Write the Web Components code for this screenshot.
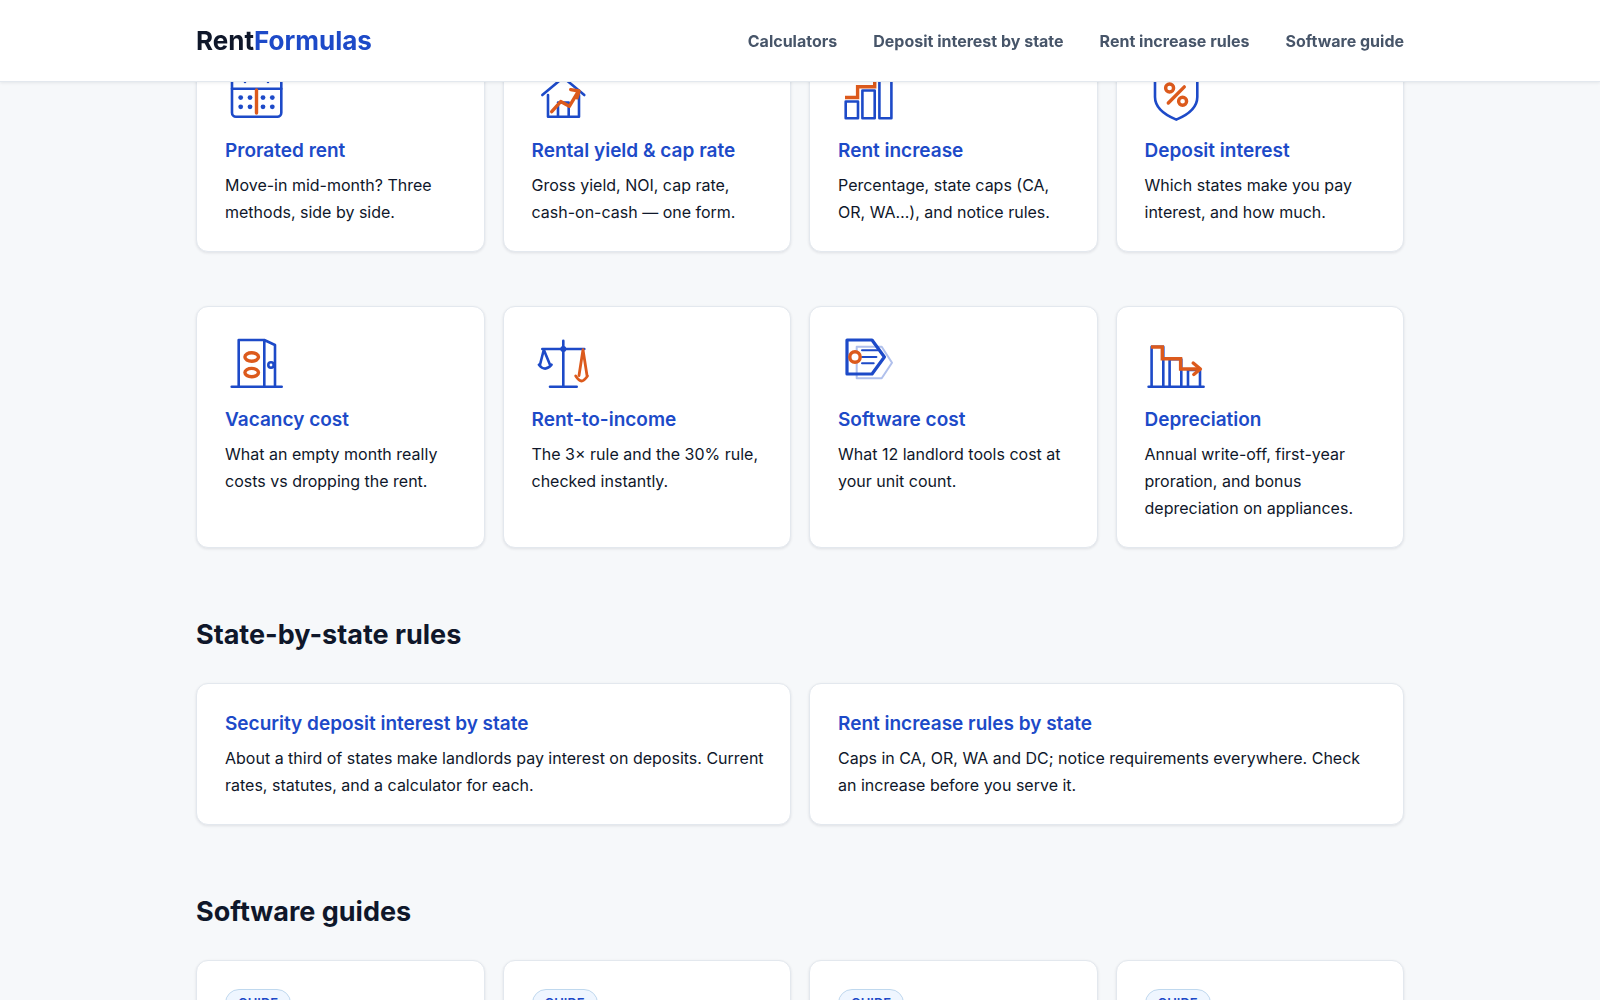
<!DOCTYPE html>
<html lang="en">
<head>
<meta charset="utf-8">
<meta name="viewport" content="width=device-width, initial-scale=1">
<title>RentFormulas</title>
<style>
  :root {
    --ink: #0f172a;
    --blue: #1d4ac8;
    --orange: #dc5a1c;
    --nav: #475569;
    --page: #f6f8fa;
    --line: #e3e8ee;
    --wrap: 1208px;
  }
  body {
    margin: 0;
    height: 100vh;
    overflow: hidden;
    background: var(--page);
    color: var(--ink);
    font-family: Inter, "Liberation Sans", sans-serif;
    font-size: 16px;
  }
</style>
</head>
<body>
<rf-header>
  <a slot="nav" href="#calculators">Calculators</a>
  <a slot="nav" href="#deposit">Deposit interest by state</a>
  <a slot="nav" href="#increase">Rent increase rules</a>
  <a slot="nav" href="#software">Software guide</a>
</rf-header>
<rf-main>
  <rf-grid>
    <rf-card icon="calendar" heading="Prorated rent">Move-in mid-month? Three methods, side by side.</rf-card>
    <rf-card icon="house" heading="Rental yield &amp; cap rate">Gross yield, NOI, cap rate, cash-on-cash — one form.</rf-card>
    <rf-card icon="increase" heading="Rent increase">Percentage, state caps (CA, OR, WA…), and notice rules.</rf-card>
    <rf-card icon="shield" heading="Deposit interest">Which states make you pay interest, and how much.</rf-card>
  </rf-grid>
  <rf-grid>
    <rf-card icon="door" heading="Vacancy cost">What an empty month really costs vs dropping the rent.</rf-card>
    <rf-card icon="scales" heading="Rent-to-income">The 3× rule and the 30% rule, checked instantly.</rf-card>
    <rf-card icon="tag" heading="Software cost">What 12 landlord tools cost at your unit count.</rf-card>
    <rf-card icon="decline" heading="Depreciation">Annual write-off, first-year proration, and bonus depreciation on appliances.</rf-card>
  </rf-grid>
  <rf-section heading="State-by-state rules">
    <rf-grid columns="2">
      <rf-card heading="Security deposit interest by state">About a third of states make landlords pay interest on deposits. Current rates, statutes, and a calculator for each.</rf-card>
      <rf-card heading="Rent increase rules by state">Caps in CA, OR, WA and DC; notice requirements everywhere. Check an increase before you serve it.</rf-card>
    </rf-grid>
  </rf-section>
  <rf-section heading="Software guides">
    <rf-grid>
      <rf-card badge="GUIDE"></rf-card>
      <rf-card badge="GUIDE"></rf-card>
      <rf-card badge="GUIDE"></rf-card>
      <rf-card badge="GUIDE"></rf-card>
    </rf-grid>
  </rf-section>
</rf-main>

<script>
// b = blue stroke, o = orange stroke
const ICONS = {
  calendar: `
    <rect class="b" x="7" y="9" width="49.3" height="43.8" rx="4"/>
    <path class="b" d="M7 24.8H56.3M20 5V18M43 5V18"/>
    <g class="dot"><circle cx="15.7" cy="33.6" r="2.4"/><circle cx="25" cy="33.6" r="2.4"/><circle cx="38" cy="33.6" r="2.4"/><circle cx="47.3" cy="33.6" r="2.4"/>
    <circle cx="15.7" cy="42.8" r="2.4"/><circle cx="25" cy="42.8" r="2.4"/><circle cx="38" cy="42.8" r="2.4"/><circle cx="47.3" cy="42.8" r="2.4"/></g>
    <path class="o" d="M31.5 26V49"/>`,
  house: `
    <path class="b" d="M10.3 31L31.3 13.4L52.3 31M16 31V52.8H47V31M26 41V52M26 38.5H36.7V52"/>
    <path class="o" d="M19.7 47.7L28.7 37.6L37.3 42.3L46 28M38.7 25.6L47 27L45 33.8"/>`,
  increase: `
    <path class="b" d="M7.7 37.5H20V54.2H7.7ZM24.4 26.5H36.7V54.2H24.4ZM41.4 13H53.4V54.2H41.4Z"/>
    <path class="o sharp" d="M7 33.5H19.6V22.8H36.7V11H50M45 5L51 11L47.5 17"/>`,
  shield: `
    <path class="b" d="M31.3 6L52.3 12V33C52.3 44 43 50.8 31.3 55.6C19.5 50.8 10 44 10 33V12Z"/>
    <g class="o"><circle cx="24.6" cy="24" r="4"/><circle cx="37.6" cy="37.3" r="4"/><path d="M39.3 22.9L23.3 39"/></g>`,
  door: `
    <path class="b" d="M13.7 53.7V7H39.3V53.7M39.3 7L50 12V53.7M6.7 53.7H56.7"/>
    <circle class="b" cx="46" cy="32" r="2.7"/>
    <g class="o"><ellipse cx="26.7" cy="24" rx="6.8" ry="4.2"/><ellipse cx="26.7" cy="39.6" rx="6.8" ry="4.2"/></g>`,
  scales: `
    <path class="b" d="M31.3 7.7V53.7M18 53.7H44.7M10.3 16H52.3M11.8 16.7L8 31.7M11.8 16.7L18 31.7M6.9 31.7Q13 39.5 19.6 31.7"/>
    <circle class="dot" cx="31.3" cy="16" r="3"/>
    <path class="o thin" d="M51 16.7L47 42.5M51 16.7L55 42.5M43.7 43Q47 48 49.5 48Q52 48 55.5 43"/>`,
  tag: `
    <path class="b ghost" d="M18.7 13.7H43.7L54 29.7L43.7 45.3H18.7Z"/>
    <path class="b thick" d="M9 7H34L46.4 24L34 41H9Z"/>
    <path class="b fine" d="M24 17.3H39.7M24 24H38.4M24 30.3H35.7"/>
    <circle class="o" cx="17" cy="24" r="5.2" fill="#fff"/>`,
  decline: `
    <path class="b" d="M6.6 53.7V13.7H18.3V53.7M24.6 53.7V26.3H36.3V53.7M43 53.7V37H55V53.7M3.6 53.7H58.6"/>
    <path class="o sharp" d="M6 14H17.3V25.7H35.6V36H55"/>
    <path class="o" d="M48.2 30L55.4 36L48.8 41.5"/>`
}

class RfHeader extends HTMLElement {
  constructor () {
    super()
    this.attachShadow({mode: 'open'}).innerHTML = `
      <style>
        :host {
          display: block;
          position: fixed;
          top: 0;
          left: 0;
          right: 0;
          z-index: 10;
          background: #fff;
          border-bottom: 1px solid var(--line);
          box-shadow: 0 1px 3px rgba(15, 23, 42, 0.08);
        }
        .bar {
          display: flex;
          align-items: center;
          justify-content: space-between;
          box-sizing: border-box;
          max-width: var(--wrap);
          min-height: 81px;
          margin: 0 auto;
        }
        .logo {
          color: var(--ink);
          font-size: 26px;
          font-weight: 700;
          text-decoration: none;
        }
        .logo span { color: var(--blue); }
        nav {
          display: flex;
          gap: 36px;
        }
        ::slotted(a) {
          color: var(--nav);
          font-size: 16px;
          font-weight: 700;
          text-decoration: none;
        }
      </style>
      <header class="bar">
        <a class="logo" href="#">Rent<span>Formulas</span></a>
        <nav><slot name="nav"></slot></nav>
      </header>
    `
  }
}

class RfMain extends HTMLElement {
  constructor () {
    super()
    this.attachShadow({mode: 'open'}).innerHTML = `
      <style>
        :host { display: block; }
        main {
          display: flex;
          flex-direction: column;
          gap: 54px;
          max-width: var(--wrap);
          margin: 0 auto;
          padding-top: 37px;
        }
      </style>
      <main><slot></slot></main>
    `
  }
}

class RfGrid extends HTMLElement {
  connectedCallback () {
    const columns = this.getAttribute('columns') || 4
    this.attachShadow({mode: 'open'}).innerHTML = `
      <style>
        :host {
          display: grid;
          grid-template-columns: repeat(${columns}, minmax(0, 1fr));
          gap: 18px;
        }
      </style>
      <slot></slot>
    `
  }
}

class RfSection extends HTMLElement {
  connectedCallback () {
    this.attachShadow({mode: 'open'}).innerHTML = `
      <style>
        :host {
          display: block;
          padding-top: 15px;
        }
        h2 {
          margin: 0 0 30px;
          font-size: 27px;
          font-weight: 700;
          line-height: 36px;
        }
      </style>
      <section>
        <h2></h2>
        <slot></slot>
      </section>
    `
    this.shadowRoot.querySelector('h2').textContent = this.getAttribute('heading')
  }
}

class RfIcon extends HTMLElement {
  connectedCallback () {
    this.attachShadow({mode: 'open'}).innerHTML = `
      <style>
        :host { display: block; }
        svg {
          display: block;
          width: 60px;
          height: 60px;
          fill: none;
          stroke-linecap: round;
          stroke-linejoin: round;
        }
        .b { stroke: var(--blue); stroke-width: 2.6; }
        .o { stroke: var(--orange); stroke-width: 3.4; }
        .dot { fill: var(--blue); }
        .sharp { stroke-linejoin: miter; stroke-linecap: butt; }
        .thin { stroke-width: 2.8; }
        .thick { stroke-width: 3.2; }
        .fine { stroke-width: 2; }
        .ghost { stroke-width: 2; opacity: 0.35; }
      </style>
      <svg viewBox="0 0 60 60" aria-hidden="true">${ICONS[this.getAttribute('name')]}</svg>
    `
  }
}

class RfCard extends HTMLElement {
  connectedCallback () {
    const icon = this.getAttribute('icon')
    const badge = this.getAttribute('badge')
    const heading = this.getAttribute('heading')
    this.attachShadow({mode: 'open'}).innerHTML = `
      <style>
        :host {
          display: block;
          box-sizing: border-box;
          padding: 26px 24px 25px 28px;
          background: #fff;
          border: 1px solid var(--line);
          border-radius: 12px;
          box-shadow: 0 1px 3px rgba(15, 23, 42, 0.1);
        }
        rf-icon { margin-bottom: 13px; }
        h3 {
          margin: 0 0 7px;
          font-size: 19px;
          font-weight: 600;
          line-height: 28px;
        }
        a {
          color: var(--blue);
          text-decoration: none;
        }
        p {
          margin: 0;
          font-size: 16px;
          line-height: 27px;
        }
        .badge {
          display: inline-block;
          margin-top: 2px;
          padding: 4px 12px;
          background: #eff6ff;
          border: 1px solid #bfd8ee;
          border-radius: 14px;
          color: var(--blue);
          font-size: 13px;
          font-weight: 600;
          line-height: 18px;
        }
      </style>
      ${icon ? `<rf-icon name="${icon}"></rf-icon>` : ''}
      ${badge ? `<span class="badge">${badge}</span>` : ''}
      ${heading ? '<h3><a href="#"></a></h3>' : ''}
      <p><slot></slot></p>
    `
    if (heading) this.shadowRoot.querySelector('a').textContent = heading
  }
}

window.customElements.define('rf-header', RfHeader)
window.customElements.define('rf-main', RfMain)
window.customElements.define('rf-grid', RfGrid)
window.customElements.define('rf-section', RfSection)
window.customElements.define('rf-icon', RfIcon)
window.customElements.define('rf-card', RfCard)
</script>
</body>
</html>
